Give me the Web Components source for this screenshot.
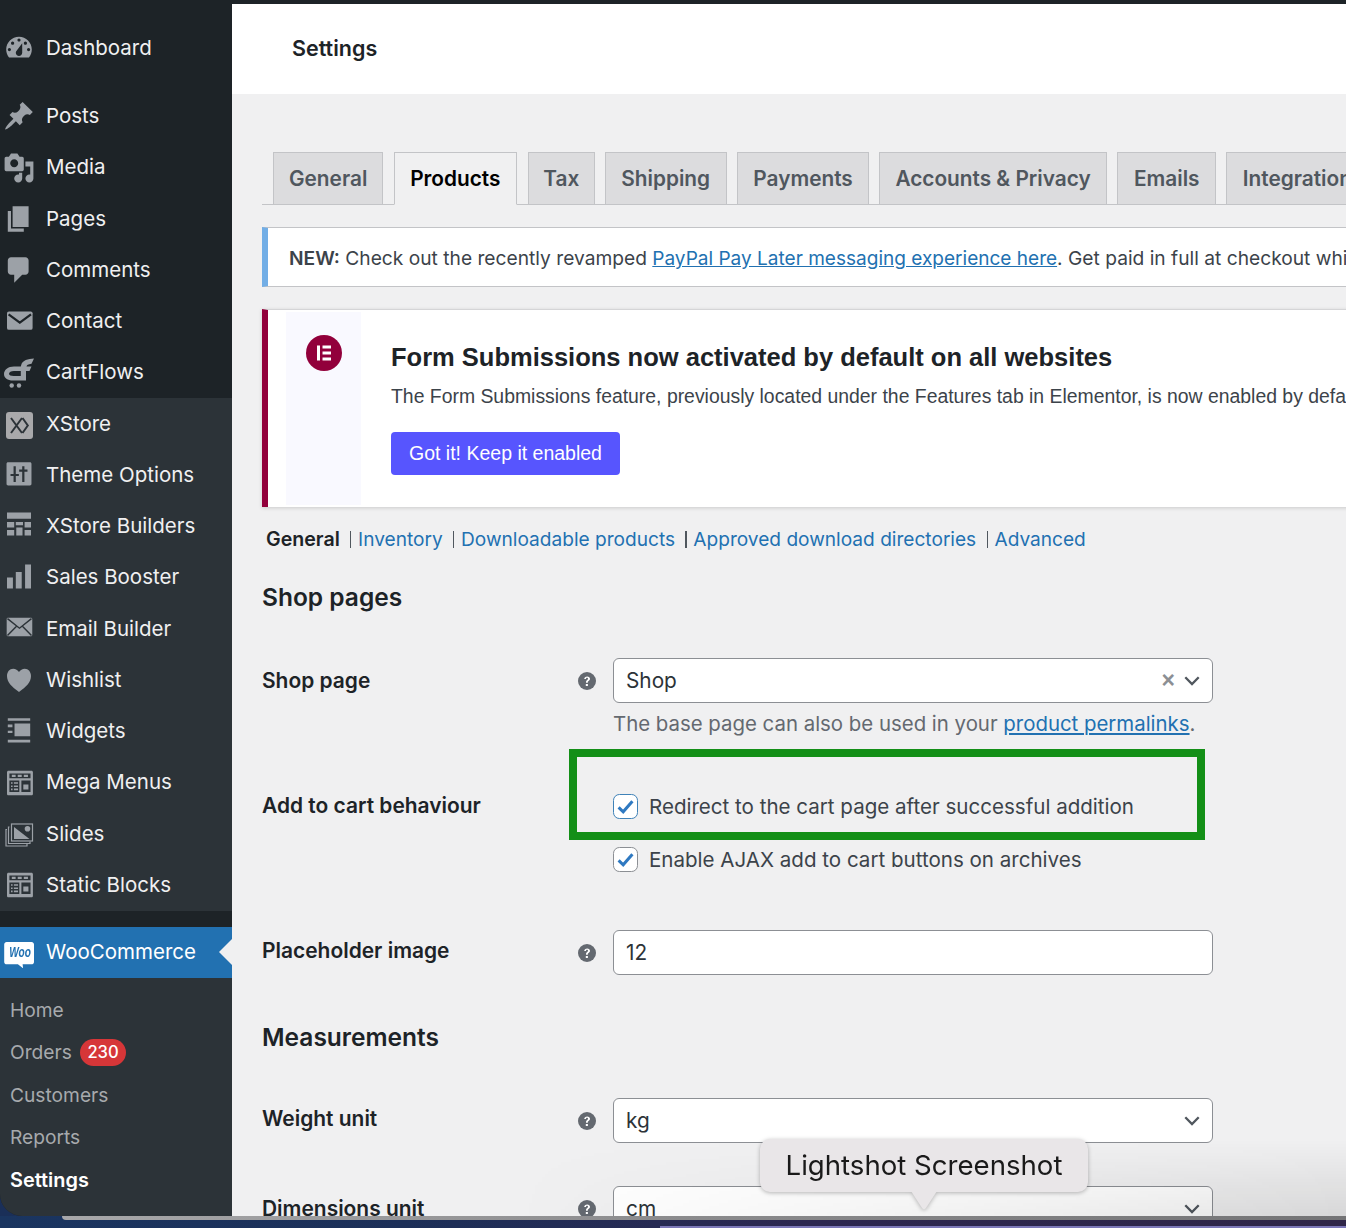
<![CDATA[<!DOCTYPE html>
<html lang="en"><head><meta charset="utf-8"><title>Settings</title>
<style>
html,body{margin:0;padding:0;background:#1a2f58;overflow:hidden}
body{font-family:Inter,"Liberation Sans",sans-serif;font-size:20.8px;color:#3c434a}
</style></head><body>
<wp-shell>
  <wp-sidebar slot="side">
    <wp-group tone="dark" pad="22.4px 0 0">
      <wp-item icon="dashboard">Dashboard</wp-item>
    </wp-group>
    <wp-group tone="dark" pad="17px 0 0">
      <wp-item icon="post">Posts</wp-item>
      <wp-item icon="media">Media</wp-item>
      <wp-item icon="page">Pages</wp-item>
      <wp-item icon="comments">Comments</wp-item>
      <wp-item icon="contact">Contact</wp-item>
      <wp-item icon="cartflows">CartFlows</wp-item>
    </wp-group>
    <wp-group tone="light">
      <wp-item icon="xstore">XStore</wp-item>
      <wp-item icon="theme">Theme Options</wp-item>
      <wp-item icon="builders">XStore Builders</wp-item>
      <wp-item icon="sales">Sales Booster</wp-item>
      <wp-item icon="email">Email Builder</wp-item>
      <wp-item icon="heart">Wishlist</wp-item>
      <wp-item icon="widgets">Widgets</wp-item>
      <wp-item icon="mega">Mega Menus</wp-item>
      <wp-item icon="slides">Slides</wp-item>
      <wp-item icon="mega">Static Blocks</wp-item>
    </wp-group>
    <wp-group tone="dark" pad="16px 0 0">
      <wp-item icon="woo" current>WooCommerce</wp-item>
    </wp-group>
    <wp-group tone="light" pad="11.3px 0 0">
      <wp-subitem>Home</wp-subitem>
      <wp-subitem>Orders<wp-count>230</wp-count></wp-subitem>
      <wp-subitem>Customers</wp-subitem>
      <wp-subitem>Reports</wp-subitem>
      <wp-subitem active>Settings</wp-subitem>
    </wp-group>
  </wp-sidebar>
  <wp-main slot="main">
    <wp-header>Settings</wp-header>
    <wp-content>
      <wp-tabs>
        <wp-tab narrow>General</wp-tab><wp-tab active>Products</wp-tab><wp-tab tight>Tax</wp-tab><wp-tab>Shipping</wp-tab><wp-tab>Payments</wp-tab><wp-tab nudge>Accounts &amp; Privacy</wp-tab><wp-tab>Emails</wp-tab><wp-tab>Integration</wp-tab>
      </wp-tabs>
      <wp-notice><b>NEW:</b> Check out the recently revamped <wp-link small>PayPal Pay Later messaging experience here</wp-link>. Get paid in full at checkout while giving your customers the flexibility to pay over time.</wp-notice>
      <wp-promo title="Form Submissions now activated by default on all websites" action="Got it! Keep it enabled">The Form Submissions feature, previously located under the Features tab in Elementor, is now enabled by default on all websites.</wp-promo>
      <wp-subnav>
        <b>General</b><wp-sep></wp-sep><wp-link plain>Inventory</wp-link><wp-sep></wp-sep><wp-link plain>Downloadable products</wp-link><wp-sep></wp-sep><wp-link plain>Approved download directories</wp-link><wp-sep></wp-sep><wp-link plain>Advanced</wp-link>
      </wp-subnav>
      <wp-heading gap="28px">Shop pages</wp-heading>
      <wp-row label="Shop page" help gap="46px"><wp-field clearable arrow>Shop</wp-field></wp-row>
      <wp-desc>The base page can also be used in your <wp-link>product permalinks</wp-link>.</wp-desc>
      <wp-row label="Add to cart behaviour" gap="52px" annotated><wp-check focused>Redirect to the cart page after successful addition</wp-check></wp-row>
      <wp-row label="" gap="23px"><wp-check>Enable AJAX add to cart buttons on archives</wp-check></wp-row>
      <wp-row label="Placeholder image" help lift gap="56px"><wp-field>12</wp-field></wp-row>
      <wp-heading gap="47px">Measurements</wp-heading>
      <wp-row label="Weight unit" help lift gap="46px"><wp-field arrow>kg</wp-field></wp-row>
      <wp-row label="Dimensions unit" help gap="43px"><wp-field arrow>cm</wp-field></wp-row>
    </wp-content>
    <wp-dock-tip slot="over">Lightshot Screenshot</wp-dock-tip>
  </wp-main>
</wp-shell>
<script>
const P={
dashboard:'<path fill-rule="evenodd" d="M3.76 16h12.48C17.34 14.63 18 12.89 18 11c0-4.420-3.580-8-8-8s-8 3.580-8 8c0 1.890.66 3.630 1.760 5zM10 4c.55 0 1 .45 1 1s-.45 1-1 1-1-.45-1-1 .45-1 1-1zM6 6c.55 0 1 .45 1 1s-.45 1-1 1-1-.45-1-1 .45-1 1-1zm8 0c.55 0 1 .45 1 1s-.45 1-1 1-1-.45-1-1 .45-1 1-1zm-5.370 5.550L12 7v6c0 1.100-.9 2-2 2s-2-.9-2-2c0-.57.24-1.080.63-1.450zM4 10c.55 0 1 .45 1 1s-.45 1-1 1-1-.45-1-1 .45-1 1-1zm12 0c.55 0 1 .45 1 1s-.45 1-1 1-1-.45-1-1 .45-1 1-1z"/>',
post:'<path d="M10.440 3.020l1.820-1.820 6.360 6.350-1.830 1.820c-1.050-.68-2.480-.57-3.410.36l-.75.75c-.92.93-1.040 2.350-.35 3.410l-1.830 1.820-2.410-2.410-2.800 2.790c-.42.42-3.380 2.710-3.800 2.290s1.860-3.390 2.280-3.810l2.790-2.790L4.100 9.360l1.830-1.820c1.050.69 2.480.57 3.410-.36l.75-.75c.93-.92 1.050-2.350.35-3.410z"/>',
media:'<path fill-rule="evenodd" d="M13 11V4c0-.55-.45-1-1-1h-1.670L9 1H5L3.670 3H2c-.55 0-1 .45-1 1v7c0 .55.45 1 1 1h10c.55 0 1-.45 1-1zM7 4.500c1.380 0 2.500 1.120 2.500 2.500S8.380 9.500 7 9.500 4.500 8.380 4.500 7 5.620 4.500 7 4.500zM14 6h5v10.500c0 1.380-1.120 2.500-2.500 2.500S14 17.880 14 16.500s1.120-2.500 2.500-2.500c.17 0 .34.020.5.050V9h-3V6zm-4 8.050V13h2v3.500c0 1.380-1.120 2.500-2.500 2.500S7 17.880 7 16.500 8.120 14 9.500 14c.17 0 .34.020.5.050z"/>',
page:'<path d="M6 15V2h10v13H6zm-1 1h8v2H3V5h2v11z"/>',
comments:'<path d="M5 2h9c1.100 0 2 .9 2 2v7c0 1.100-.9 2-2 2h-2l-5 5v-5H5c-1.100 0-2-.9-2-2V4c0-1.100.9-2 2-2z"/>',
contact:'<rect x="2.500" y="4" width="16" height="11.500" rx="1.200"/><path d="M3.500 5.800l7 5.200 7-5.200" fill="none" stroke="#1d2327" stroke-width="1.400"/>',
cartflows:'<path fill-rule="evenodd" d="M31 1.500C25 2 19.500 3 18.200 8L17.800 9.500H11C5 9.500 1 13 1 17s3.500 6.500 9 6.500H23V14H26.500L28.500 9.500H23.500C23.800 8 25 7.200 28.500 6.800zM11 14H17.800V19H10.500C8 19 6 18.300 6 16.800s2-2.800 5-2.800z"/><circle cx="8.700" cy="28.500" r="2.200"/><circle cx="16" cy="28.500" r="2.200"/>',
xstore:'<rect x="3" y="4" width="27" height="27" rx="3" fill="#a9a9ab"/><path d="M8 10l11 15M19 10L8 25M19.500 10l5.300 7.500-5.300 7.500" fill="none" stroke="#2c3338" stroke-width="2"/>',
theme:'<path fill-rule="evenodd" d="M3.200 2h13.600c.6 0 1 .4 1 1v12.500c0 .6-.4 1-1 1H3.200c-.6 0-1-.4-1-1V3c0-.6.4-1 1-1zM6.600 4.500v4.800H4.700v1.300h1.900v3.700H8v-3.700h1.900V9.300H8V4.500zm5.400 0v2H10.100v1.400H12v6.400h1.400V7.900h1.900V6.500h-1.900v-2z"/>',
builders:'<path d="M2.500 1.500h15v4h-15zM2.500 7.500h4.500v3.500H2.500zM8 7.500H12.500v2H8zM13.500 7.500h4v3.500h-4zM2.500 12.500h4.500v3.500H2.500zM8.300 11h3.900v5H8.300zM13.500 12.500h4v3.500h-4z"/>',
sales:'<path d="M2.500 9.700h3.700V16.500H2.500zM8 6.300h3.700V16.500H8zM13.800 1.500h3.700v15h-3.700z"/>',
email:'<rect x="2.300" y="3" width="16" height="11.500" rx=".8"/><path d="M2.800 3.500l7.500 6 7.500-6M2.800 14l5.500-5.500M17.800 14l-5.500-5.500" fill="none" stroke="#2c3338" stroke-width=".9"/>',
heart:'<path d="M10 17.500C5.500 14.300 2.500 11.500 2.500 7.500 2.500 5 4.100 3 6.400 3 7.900 3 9.200 3.800 10 5c.8-1.200 2.100-2 3.600-2 2.300 0 3.900 2 3.900 4.500 0 4-3 6.800-7.500 10z"/>',
widgets:'<path fill-rule="evenodd" d="M3 2H17v1.600H3zM3 15.500H17v1.700H3zM7.200 5.300H17v8H7.200zM3 6h2.900v1.700H3zM3 9.800h2.900v1.500H3z"/>',
mega:'<path fill-rule="evenodd" d="M3.400 2.300h14.400c.5 0 .9.400.9.900v13.600c0 .5-.4.900-.9.900H3.400c-.5 0-.9-.4-.9-.9V3.200c0-.5.4-.9.9-.9zM4 4v3h13.200V4zM5.500 4.800h2.400v1.400H5.500zM9.200 4.800h2.500v1.400H9.200zM13 4.800h2.600v1.400H13zM4 8.500v7.200h6.200V8.500zM11.500 8.500v7.200h5.700V8.500zM5 9.500h1v1H5zM6.800 9.500h2.600v1H6.800zM5 11.500h1v1H5zM6.800 11.500h2.600v1H6.800zM5 13.500h1v1H5zM6.800 13.500h2.600v1H6.800zM12.700 11h3.200v3h-3.200z"/>',
slides:'<g fill="none" stroke="currentColor" stroke-width="1.200"><path d="M4 11.500H3V28H24V26"/><path d="M6.500 9H5.500V25.500H27V23.500"/><rect x="8.500" y="6" width="21" height="17"/></g><path d="M11 9L26.500 21H11z"/><circle cx="24.500" cy="10.800" r="2.800"/>',
woo:'<path fill="#fff" d="M3.600 6h25c1.200 0 2.400 1 2.400 2.400v17.500c0 1.300-1.200 2.400-2.400 2.400h-9l.5 4-5.200-4H3.600c-1.200 0-2.400-1.100-2.400-2.400V8.400C1.200 7 2.400 6 3.600 6z"/>'
};
function def(name,html,extra){
  const t=document.createElement('template');t.innerHTML=html;
  customElements.define(name,class extends HTMLElement{
    constructor(){super();this.attachShadow({mode:'open'}).appendChild(t.content.cloneNode(true));}
    connectedCallback(){extra&&extra.call(this,this.shadowRoot);}
  });
}
def('wp-shell',`<style>:host{display:flex;flex-direction:column;width:1346px;height:1228px;overflow:hidden}
.win{flex:none;height:1216px;display:flex;overflow:hidden;border-radius:0 0 0 22px}
.side{flex:none;width:232px;display:flex}.main{flex:1;min-width:0;display:flex}
.desk{flex:1;display:flex;flex-direction:column;background:linear-gradient(90deg,#1a3560 0,#1c2f58 30%,#2c2750 60%,#2f2648 100%)}
.edge{height:4px;margin-left:62px;background:linear-gradient(90deg,#a8a8aa 0,#8a8a8c 50%,#747476 100%);border-radius:0 0 0 8px}
.lav{margin-top:auto;height:2px;margin-left:660px;background:#7c78b8}
</style><div class="win"><div class="side"><slot name="side"></slot></div><div class="main"><slot name="main"></slot></div></div><div class="desk"><div class="edge"></div><div class="lav"></div></div>`);
def('wp-sidebar',`<style>:host{display:flex;flex-direction:column;width:232px;background:#1d2327;flex:none}
</style><slot></slot>`);
def('wp-group',`<style>:host{display:block;background:#1d2327}:host([tone=light]){background:#2c3338;flex:none}:host(:last-child){flex:1}</style><slot></slot>`,function(s){if(this.getAttribute('pad'))this.style.padding=this.getAttribute('pad')});
def('wp-item',`<style>:host{display:flex;align-items:center;height:51.27px;color:#f0f0f1;font:400 20.5px/1 Inter,sans-serif;position:relative;white-space:nowrap}
:host([current]){background:#2271b1;color:#fff;height:51px}
:host([current])::after{content:"";position:absolute;right:0;top:50%;margin-top:-13px;border:13px solid transparent;border-right-color:#f0f0f1;border-left:0}
.i{flex:none;width:32px;height:32px;margin:0 11px 0 3px;display:block;color:#9ca1a7;position:relative}
svg{width:32px;height:32px;fill:currentColor;display:block}
.woo{position:absolute;left:2px;top:9px;width:30px;text-align:center;font:italic 700 14px/15px "Liberation Sans",sans-serif;color:#2271b1;transform:scaleX(.72)}
</style><span class="i"></span><slot></slot>`,function(s){const n=this.getAttribute('icon');
  const vb=(n==='woo'||n==='cartflows'||n==='slides'||n==='xstore')?'0 0 32 32':'0 0 20 20';
  s.querySelector('.i').innerHTML=`<svg viewBox="${vb}" aria-hidden="true">${P[n]||''}</svg>`+(n==='woo'?'<span class="woo">Woo</span>':'');});
def('wp-subitem',`<style>:host{display:flex;align-items:center;height:42.5px;padding-left:10px;color:#a7aaad;font:400 19.2px/1 Inter,sans-serif;white-space:nowrap}
:host([active]){color:#fff;font-weight:600;font-size:19.9px}</style><slot></slot>`);
def('wp-count',`<style>:host{display:inline-block;height:27px;padding:0 7.5px;border-radius:14px;background:#d63638;color:#fff;font:500 16.6px/27px Inter,sans-serif;margin-left:8px}</style><slot></slot>`);
def('wp-main',`<style>:host{display:flex;flex-direction:column;flex:1;min-width:0;background:#f0f0f1;border-top:4px solid #1d2327;position:relative;overflow:hidden}
.shade{position:absolute;left:0;right:0;bottom:0;height:76px;background:linear-gradient(180deg,rgba(0,0,0,0),rgba(0,0,0,.1));-webkit-mask-image:linear-gradient(90deg,transparent 25%,#000 100%);mask-image:linear-gradient(90deg,transparent 25%,#000 100%);pointer-events:none}
</style><slot></slot><div class="shade"></div><slot name="over"></slot>`);
def('wp-header',`<style>:host{display:block;flex:none;height:90px;box-sizing:border-box;padding:0 0 2px 60px;background:#fff;color:#1d2327;font:600 21.5px/88px Inter,sans-serif}</style><slot></slot>`);
def('wp-content',`<style>:host{display:block;padding:58px 0 0 30px;width:1300px;box-sizing:border-box}</style><slot></slot>`);
def('wp-tabs',`<style>:host{display:flex;gap:10.3px;padding-left:11px;height:53px;box-sizing:border-box;border-bottom:1.6px solid #c3c4c7;white-space:nowrap}</style><slot></slot>`);
def('wp-tab',`<style>:host{display:block;flex:none;height:53px;box-sizing:border-box;padding:0 15.5px;background:#dcdcde;border:1.6px solid #c3c4c7;color:#50575e;font:600 20.8px/52px Inter,sans-serif}
:host([narrow]){padding:0 15px}:host([tight]){padding:0 14.5px;margin:0 -.4px 0 .6px}:host([nudge]){margin-left:-.7px}
:host([active]){background:#f0f0f1;color:#000;border-bottom-color:#f0f0f1}</style><slot></slot>`);
def('wp-notice',`<style>:host{display:block;margin-top:22px;height:60px;box-sizing:border-box;padding-left:21px;background:#fff;border:1.6px solid #c3c4c7;border-left:6px solid #72aee6;font:400 19.2px/60px Inter,sans-serif;color:#3c434a;white-space:nowrap;overflow:hidden}
::slotted(b){font-weight:600}</style><slot></slot>`);
def('wp-link',`<style>:host{color:#2271b1;text-decoration:underline}:host([plain]){text-decoration:none}:host([small]){font-size:19.05px}</style><slot></slot>`);
def('wp-promo',`<style>:host{display:flex;margin-top:22px;height:198px;box-sizing:border-box;background:#fff;border-left:6px solid #92003b;border-top:1.6px solid #d5d5d7;box-shadow:0 1px 4px rgba(0,0,0,.16)}
.ic{flex:none;width:75px;margin:2px 0 2px 18px;background:#f9f9ff;display:flex;justify-content:center;padding-top:23px;box-sizing:border-box}
.c{flex:none;width:36px;height:36px;border-radius:50%;background:#92003b;display:block}
.b{padding:31px 0 0 30px;white-space:nowrap}
h2{margin:0;font:700 25.5px/32px "Liberation Sans",sans-serif;color:#1d2327}
p{margin:9px 0 0;font:400 19.4px/28px "Liberation Sans",sans-serif;color:#3c434a}
.btn{display:inline-block;margin-top:22px;height:43px;padding:0 18px;border-radius:4px;background:#5755fe;color:#fff;font:400 19.5px/43px "Liberation Sans",sans-serif}
</style><div class="ic"><svg class="c" viewBox="0 0 36 36" aria-hidden="true"><path fill="#fff" d="M11 10.500h3V25.500h-3zM16.500 10.500H25v3h-8.500zM16.500 16.500H25v3h-8.500zM16.500 22.500H25v3h-8.500z"/></svg></div>
<div class="b"><h2></h2><p><slot></slot></p><div class="btn"></div></div>`,function(s){s.querySelector('h2').textContent=this.getAttribute('title');s.querySelector('.btn').textContent=this.getAttribute('action');this.removeAttribute('title');});
def('wp-subnav',`<style>:host{display:flex;align-items:center;height:30px;margin-top:17px;padding-left:4px;font:400 19.1px/30px Inter,sans-serif;color:#2271b1;white-space:nowrap}
::slotted(b){color:#1d2327;font-weight:600;font-size:19.6px}</style><slot></slot>`);
def('wp-sep',`<style>:host{display:block;width:1.2px;height:17px;background:#50575e;margin:0 6.8px 0 10.3px}</style>`);
def('wp-heading',`<style>:host{display:block;height:30px;color:#1d2327;font:600 24.5px/30px Inter,sans-serif}</style><slot></slot>`,function(){this.style.marginTop=this.getAttribute('gap')});
const HELP='<svg viewBox="0 0 18 18" width="18" height="18" aria-hidden="true"><circle cx="9" cy="9" r="9" fill="#646970"/><path d="M6.200 7.100C6.300 5.400 7.500 4.400 9.200 4.400c1.700 0 2.800 1 2.800 2.300 0 1.100-.6 1.700-1.400 2.300-.6.4-.8.700-.8 1.400v.3H8v-.5c0-1 .4-1.500 1.100-2.100.6-.5.900-.8.900-1.300 0-.6-.4-1-1-1s-1 .5-1.100 1.200zM7.800 12h2.100v2H7.800z" fill="#fff"/></svg>';
def('wp-row',`<style>:host{display:grid;grid-template-columns:316px 35px 600px;align-items:center;position:relative}
.l{color:#1d2327;font:600 20.95px/30px Inter,sans-serif;white-space:nowrap}.h{display:flex}
:host([lift]) .l{padding-bottom:4px}
.ann{position:absolute;left:307px;top:-42px;width:636px;height:91px;box-sizing:border-box;border:8px solid #138f17;pointer-events:none}
</style><div class="l"></div><div class="h"></div><div class="f"><slot></slot></div>`,function(s){
  s.querySelector('.l').textContent=this.getAttribute('label');this.style.marginTop=this.getAttribute('gap');
  if(this.hasAttribute('help'))s.querySelector('.h').innerHTML=HELP;
  if(this.hasAttribute('annotated')){const d=document.createElement('div');d.className='ann';s.appendChild(d);}
});
const CHEV='<svg class="ch" viewBox="0 0 16 10" width="16" height="10" aria-hidden="true"><path d="M1.300 1.300L8 8l6.700-6.700" fill="none" stroke="#50575e" stroke-width="2.300"/></svg>';
def('wp-field',`<style>:host{display:flex;align-items:center;height:45px;box-sizing:border-box;padding:0 12px;background:#fff;border:1.6px solid #8c8f94;border-radius:6px;color:#2c3338;font:400 20.8px/1 Inter,sans-serif}
.v{padding-top:2px}.sp{flex:1}.x{color:#8c8f94;font:700 23px/1 "Liberation Sans",sans-serif;margin-right:9px}.ch{display:block}
</style><span class="v"><slot></slot></span><span class="sp"></span><span class="t"></span>`,function(s){
  let h='';if(this.hasAttribute('clearable'))h+='<span class="x">×</span>';if(this.hasAttribute('arrow'))h+=CHEV;
  const t=s.querySelector('.t');t.style.display='flex';t.style.alignItems='center';t.innerHTML=h;});
def('wp-desc',`<style>:host{display:block;height:30px;margin:6px 0 0 351px;color:#646970;font:400 20.4px/30px Inter,sans-serif;white-space:nowrap}</style><slot></slot>`);
def('wp-check',`<style>:host{display:flex;align-items:center;gap:11px;height:30px;box-sizing:border-box;padding-top:2px;color:#3c434a;font:400 20.55px/28px Inter,sans-serif;white-space:nowrap}
.b{flex:none;width:25px;height:25px;margin-top:-2px;box-sizing:border-box;background:#fff;border:1.6px solid #8c8f94;border-radius:6.4px;display:flex;align-items:center;justify-content:center}
:host([focused]) .b{border-color:#3f82b8}
</style><span class="b"><svg viewBox="0 0 25 25" width="25" height="25" aria-hidden="true"><path d="M5 13.500l5 4.800L20 6.800" fill="none" stroke="#2f79c1" stroke-width="3.300"/></svg></span><slot></slot>`);
def('wp-dock-tip',`<style>:host{position:absolute;left:528px;bottom:6px;display:block;filter:drop-shadow(0 1px 2px rgba(0,0,0,.28))}
.t{width:328px;height:53px;box-sizing:border-box;background:#e9e6e8;border-radius:10px;color:#1a1a1a;text-align:center;font:400 27.6px/53px Inter,"Liberation Sans",sans-serif;white-space:nowrap}
.a{display:block;margin:-1px auto 0;width:34px;height:19px}
</style><div class="t"><slot></slot></div><svg class="a" viewBox="0 0 34 19" aria-hidden="true"><path d="M4 0h26l-11 17c-1 1.500-3 1.500-4 0z" fill="#e9e6e8"/></svg>`);
</script>
</body></html>]]>
